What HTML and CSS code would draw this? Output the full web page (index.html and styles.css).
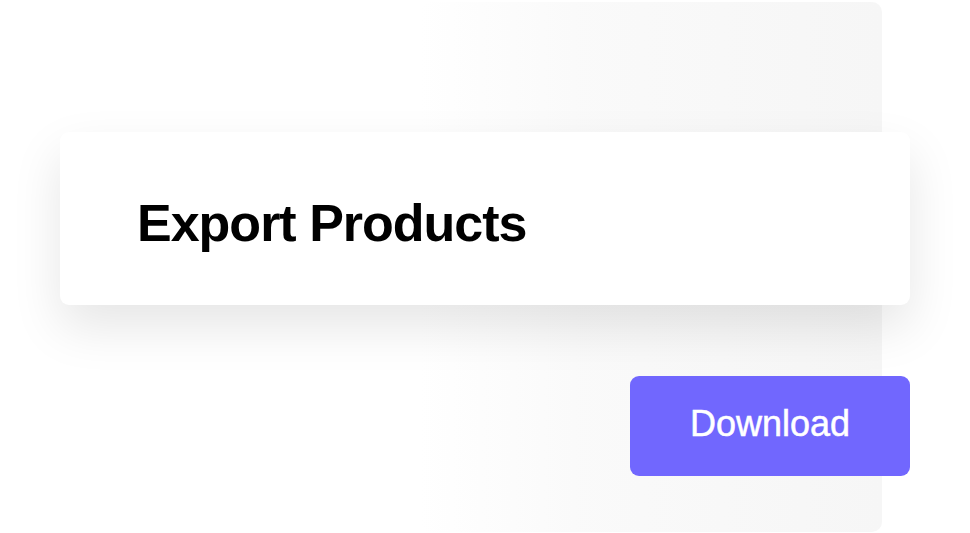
FILE: index.html
```html
<!DOCTYPE html>
<html lang="en">
<head>
<meta charset="utf-8">
<title>Export Products</title>
<link rel="stylesheet" href="styles.css">
</head>
<body>
<div class="stage">
  <div class="backdrop"></div>
  <div class="content">
    <div class="card">
      <h1 class="title">Export Products</h1>
    </div>
    <button class="download">Download</button>
  </div>
</div>
</body>
</html>
```
FILE: styles.css
```css
* { box-sizing: border-box; }
html, body {
  margin: 0;
  padding: 0;
  background: #ffffff;
  font-family: "Liberation Sans", Arial, sans-serif;
}
.stage {
  position: relative;
  width: 970px;
  height: 533px;
  overflow: hidden;
}
.backdrop {
  position: absolute;
  left: 420px;
  top: 2px;
  width: 462px;
  height: 530px;
  border-radius: 10px;
  background: linear-gradient(90deg, rgba(247,247,247,0) 0%, rgba(248,248,248,0.75) 35%, #f6f6f6 100%);
}
.content {
  position: relative;
  display: flex;
  flex-direction: column;
  padding: 132px 60px 0 60px;
}
.card {
  width: 850px;
  height: 173px;
  background: #ffffff;
  border-radius: 9px;
  box-shadow: 0 22px 50px rgba(0, 0, 0, 0.1);
  display: flex;
  align-items: center;
  padding: 8px 0 0 77px;
}
.title {
  margin: 0;
  font-size: 52px;
  font-weight: 700;
  letter-spacing: -1px;
  color: #000000;
}
.download {
  align-self: flex-end;
  margin-top: 71px;
  width: 280px;
  height: 100px;
  border: none;
  border-radius: 9px;
  background: #7167fe;
  color: #ffffff;
  font-family: "Liberation Sans", Arial, sans-serif;
  font-size: 36px;
  -webkit-text-stroke: 0.5px #ffffff;
  padding: 0 0 5px 0;
}
```
